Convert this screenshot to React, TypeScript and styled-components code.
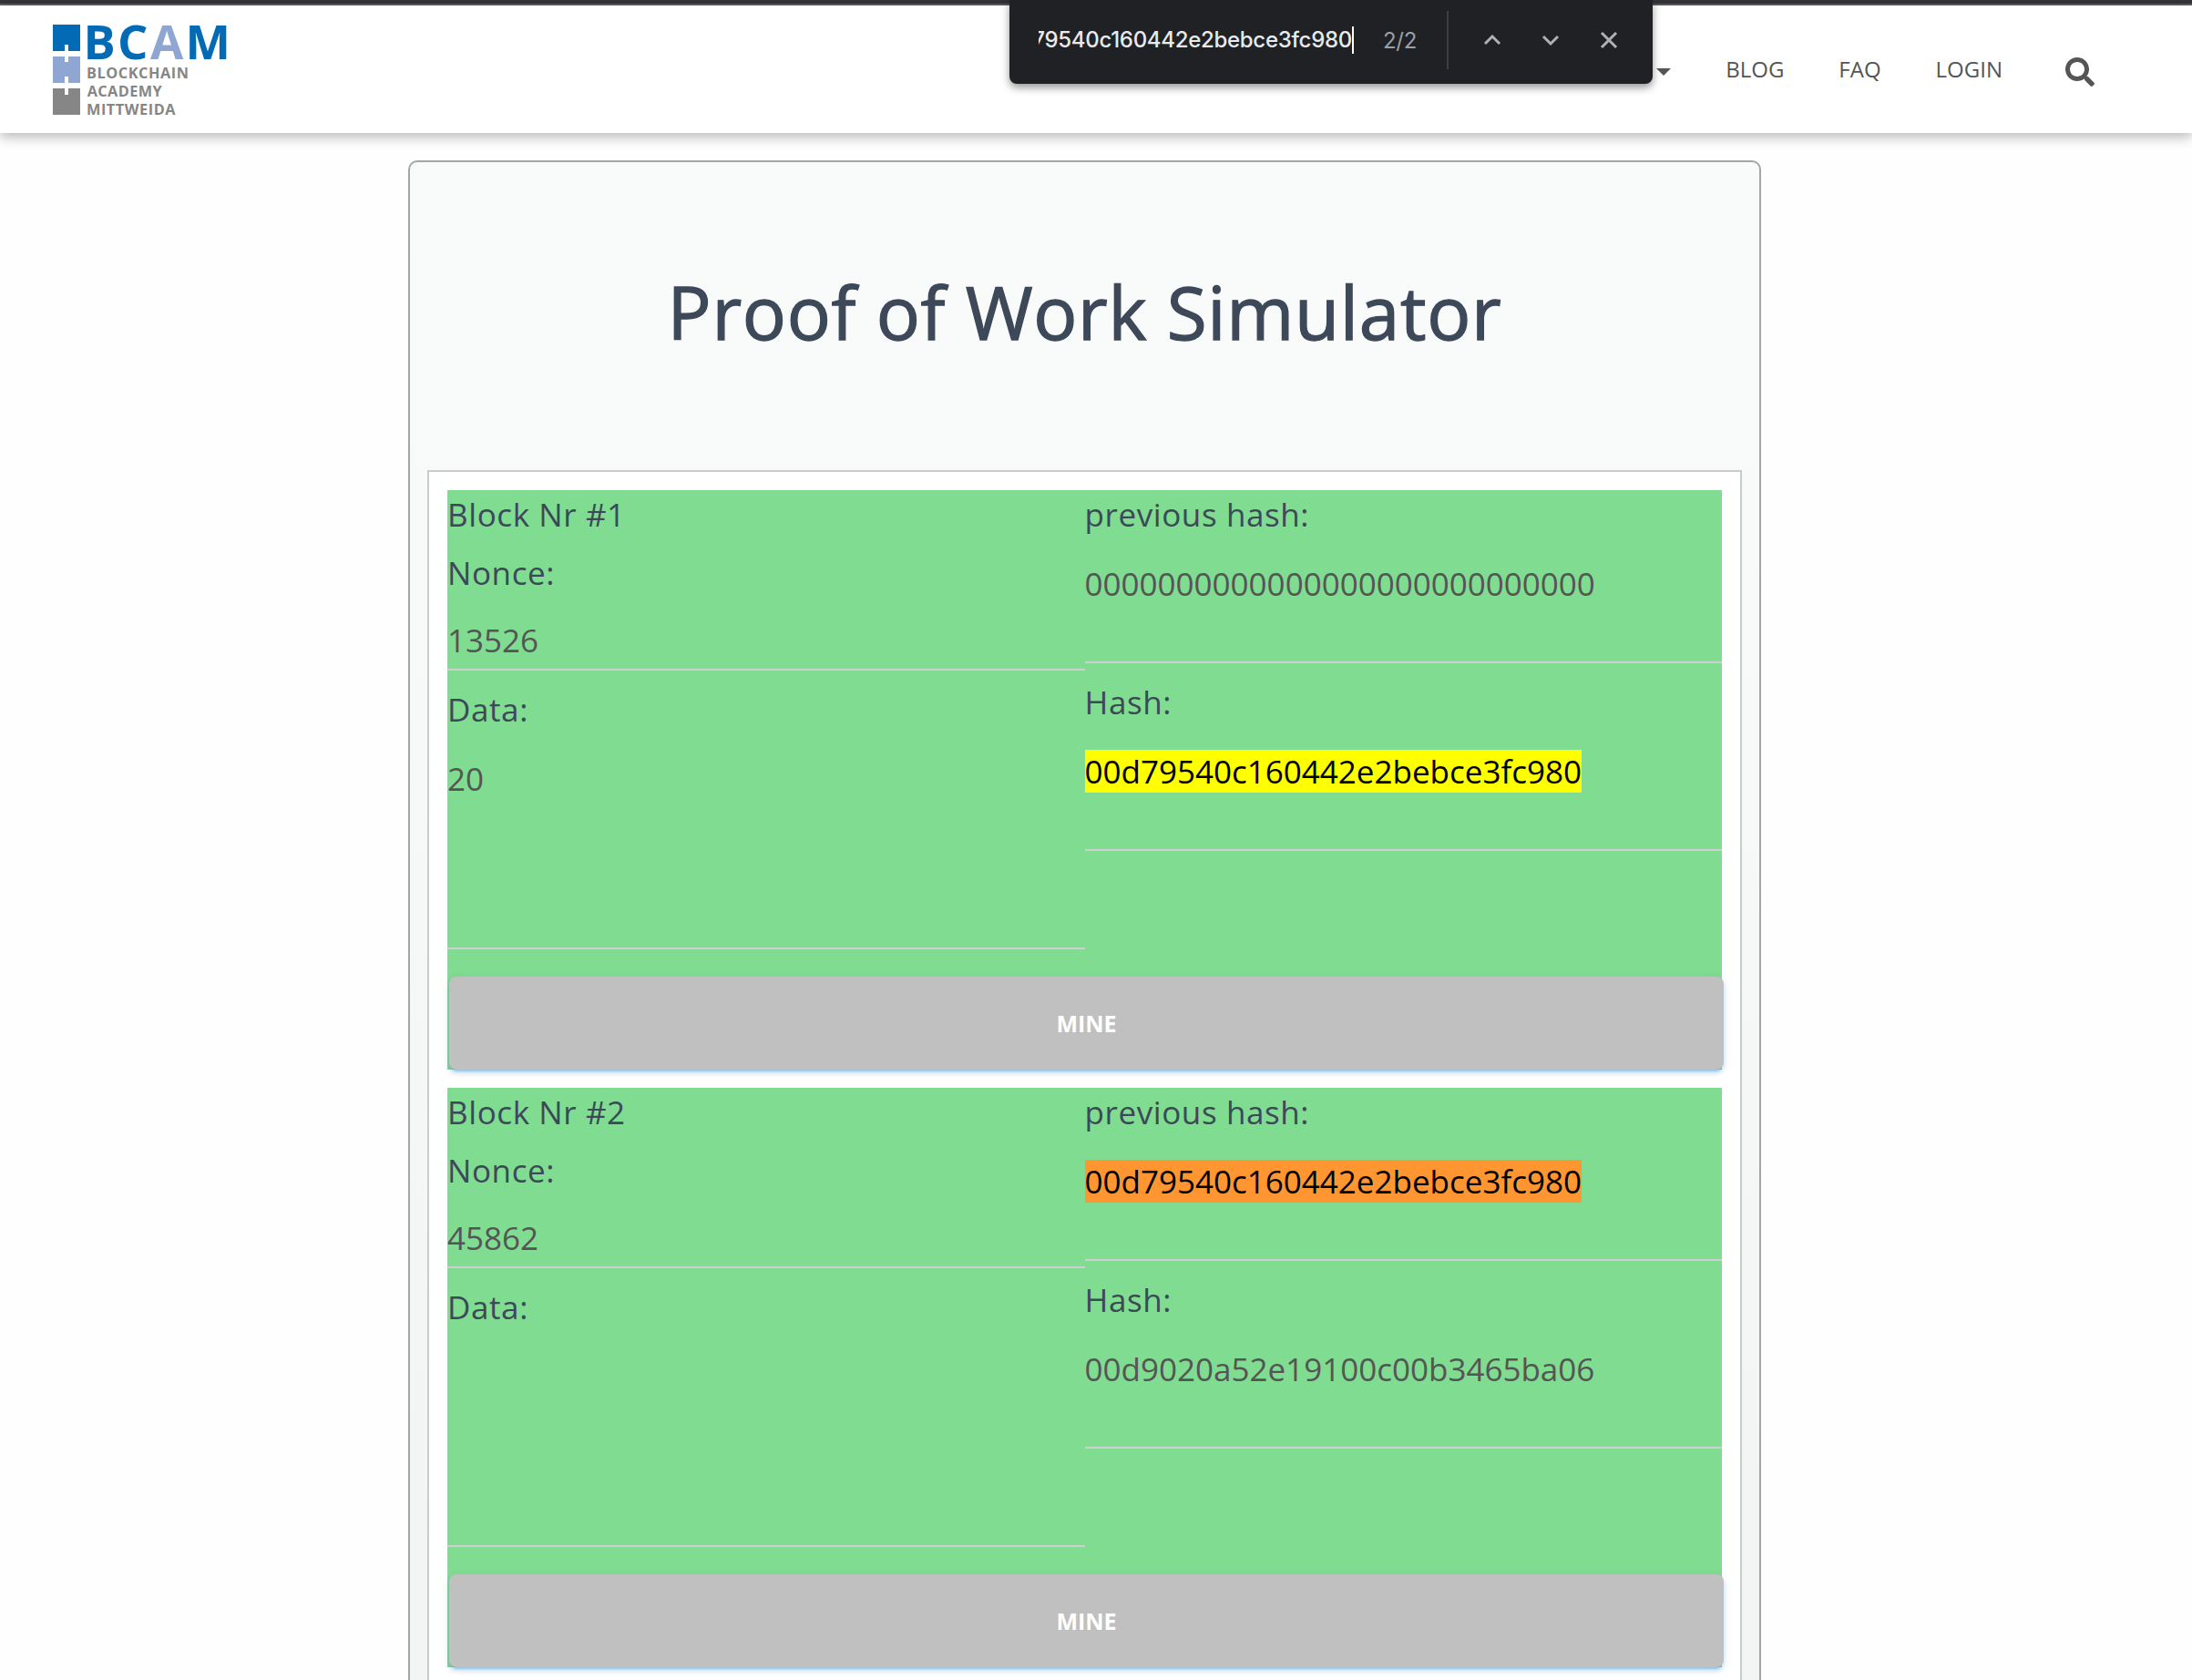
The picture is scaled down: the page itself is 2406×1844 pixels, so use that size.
import React from "react";
import styled, { createGlobalStyle } from "styled-components";
import { FaSearch } from "react-icons/fa";

const GlobalStyle = createGlobalStyle`
  *, *::before, *::after { box-sizing: border-box; }
  html, body { margin: 0; padding: 0; background: #fefefe; }
  body {
    height: 1844px;
    overflow: hidden;
    font-family: "Open Sans", "Noto Sans", sans-serif;
    color: #555;
  }
`;

const Page = styled.div`
  display: flex;
  flex-direction: column;
  width: 2406px;
  height: 1844px;
  overflow: hidden;
  position: relative;
`;

const BrowserEdge = styled.div`
  flex: none;
  height: 6px;
  background: #35363a;
  border-bottom: 2px solid #5f6064;
`;

const Header = styled.header`
  flex: none;
  display: flex;
  align-items: flex-start;
  justify-content: space-between;
  height: 140px;
  padding: 18px 107px 0 56px;
  background: #fff;
  box-shadow: 0 4px 12px rgba(0, 0, 0, 0.22), 0 2px 18px rgba(0, 0, 0, 0.1);
`;

const LogoMark = styled.svg`
  display: block;
  overflow: visible;
`;

const Nav = styled.nav`
  display: flex;
  align-items: center;
  height: 104px;
  font-size: 24px;
  line-height: 36px;
  color: #555;
`;

const Caret = styled.span`
  width: 0;
  height: 0;
  margin: 5px 60px 0 0;
  border: 8px solid transparent;
  border-top-color: #555;
  border-bottom: 0;
`;

const NavItem = styled.a<{ $gap: number }>`
  margin-right: ${(p) => p.$gap}px;
`;

const SearchIcon = styled(FaSearch)`
  width: 32px;
  height: 32px;
  margin-top: 6px;
  color: #555;
`;

const FindBar = styled.div`
  position: absolute;
  top: 0;
  left: 1108px;
  display: flex;
  align-items: center;
  width: 706px;
  height: 92px;
  padding: 0 32px 4px;
  background: #202124;
  border-radius: 0 0 8px 8px;
  box-shadow: 0 4px 10px rgba(0, 0, 0, 0.42);
  font-family: Inter, Roboto, sans-serif;
  font-size: 24px;
`;

const FindQuery = styled.div`
  display: flex;
  justify-content: flex-end;
  width: 346px;
  height: 30px;
  line-height: 30px;
  overflow: hidden;
  white-space: nowrap;
  font-weight: 500;
  letter-spacing: -0.3px;
  color: #e8eaed;
  border-right: 2px solid #fff;
`;

const FindCount = styled.div`
  width: 36px;
  margin-left: 32px;
  letter-spacing: -0.3px;
  color: #9aa0a6;
`;

const FindDivider = styled.div`
  width: 2px;
  height: 64px;
  margin: 0 36px 0 34px;
  background: #3c4043;
`;

const FindActions = styled.div`
  display: flex;
  gap: 40px;
`;

const FindIcon = styled.svg`
  display: block;
  width: 24px;
  height: 24px;
  fill: none;
  stroke: #afb1b4;
  stroke-width: 3;
`;

const Card = styled.main`
  flex: none;
  width: 1485px;
  height: 1900px;
  margin: 30px 0 0 448px;
  padding: 0 19px;
  background: linear-gradient(#f9fbfb 0, #f8faf9 420px, #f2f5f4 1500px);
  border: 2px solid #a3a6a5;
  border-radius: 10px;
`;

const Title = styled.h1`
  display: flex;
  align-items: center;
  justify-content: center;
  height: 338px;
  margin: 0;
  padding-bottom: 11px;
  font-size: 80px;
  font-weight: 400;
  letter-spacing: 0.72px;
  color: #3d4859;
  -webkit-text-stroke: 1.3px #3d4859;
`;

const Chain = styled.section`
  display: flex;
  flex-direction: column;
  gap: 20px;
  height: 1600px;
  padding: 20px;
  background: #fff;
  border: 2px solid #c9cccb;
`;

const Block = styled.article`
  display: grid;
  grid-template-columns: 1fr 1fr;
  grid-template-rows: 534px 102px;
  background: #80dc90;
`;

const Column = styled.div`
  display: flex;
  flex-direction: column;
`;

const Label = styled.label`
  height: 52px;
  margin-bottom: 12px;
  font-size: 35px;
  line-height: 54px;
  letter-spacing: 0.6px;
  color: #3d4859;
`;

const Field = styled.div<{ $height: number; $top: number }>`
  height: ${(p) => p.$height}px;
  margin-bottom: 16px;
  padding-top: ${(p) => p.$top}px;
  border-bottom: 2px solid #d0cfd0;
  font-size: 35px;
  line-height: 52px;
  color: #555;
`;

const Mark = styled.mark<{ $active?: boolean }>`
  color: #000;
  background: ${(p) => (p.$active ? "#ff9632" : "#ff0")};
`;

const MineButton = styled.button`
  grid-column: 1 / -1;
  margin: 0 -2px 0 2px;
  padding: 0;
  border: 0;
  border-radius: 8px;
  background: #c0c0c0;
  box-shadow:
    0 4px 4px rgba(0, 110, 190, 0.16),
    0 6px 2px -4px rgba(0, 110, 190, 0.22),
    0 2px 10px rgba(0, 110, 190, 0.14);
  font: 700 25px "Open Sans", "Noto Sans", sans-serif;
  color: #fff;
`;

function Logo() {
  return (
    <LogoMark width="200" height="104" viewBox="56 24 200 104" role="img" aria-label="BCAM">
      <path fill="#036ab5" d="M58 27h30v29H75v-7h-4v7H58z" />
      <path fill="#8fa5d2" d="M58 62h13v6h4v-6h13v29H75v-7h-4v7H58z" />
      <path fill="#868686" d="M58 97h13v7h4v-7h13v29H58z" />
      <g fontFamily="Open Sans" fontWeight="700">
        <text x="91.5" y="64.5" fontSize="52.5" fill="#036ab5" textLength="161.5">
          BC<tspan fill="#8fa5d2">A</tspan>M
        </text>
        <g fontSize="16.3" fill="#868686">
          <text x="95" y="86" textLength="112">BLOCKCHAIN</text>
          <text x="95.7" y="106" textLength="82">ACADEMY</text>
          <text x="95" y="126" textLength="97.5">MITTWEIDA</text>
        </g>
      </g>
    </LogoMark>
  );
}

type BlockData = { nr: number; nonce: string; data: string; prev: React.ReactNode; hash: React.ReactNode };

const blocks: BlockData[] = [
  {
    nr: 1,
    nonce: "13526",
    data: "20",
    prev: "0000000000000000000000000000",
    hash: <Mark>00d79540c160442e2bebce3fc980</Mark>,
  },
  {
    nr: 2,
    nonce: "45862",
    data: "",
    prev: <Mark $active>00d79540c160442e2bebce3fc980</Mark>,
    hash: "00d9020a52e19100c00b3465ba06",
  },
];

export default function App() {
  return (
    <Page>
      <GlobalStyle />
      <BrowserEdge />
      <Header>
        <Logo />
        <Nav>
          <Caret />
          <NavItem $gap={60}>BLOG</NavItem>
          <NavItem $gap={60}>FAQ</NavItem>
          <NavItem $gap={69}>LOGIN</NavItem>
          <SearchIcon />
        </Nav>
      </Header>
      <Card>
        <Title>Proof of Work Simulator</Title>
        <Chain>
          {blocks.map((b) => (
            <Block key={b.nr}>
              <Column>
                <Label>Block Nr #{b.nr}</Label>
                <Label>Nonce:</Label>
                <Field $height={70} $top={11}>{b.nonce}</Field>
                <Label>Data:</Label>
                <Field $height={226} $top={13}>{b.data}</Field>
              </Column>
              <Column>
                <Label>previous hash:</Label>
                <Field $height={126} $top={13}>{b.prev}</Field>
                <Label>Hash:</Label>
                <Field $height={126} $top={13}>{b.hash}</Field>
              </Column>
              <MineButton>MINE</MineButton>
            </Block>
          ))}
        </Chain>
      </Card>
      <FindBar>
        <FindQuery>79540c160442e2bebce3fc980</FindQuery>
        <FindCount>2/2</FindCount>
        <FindDivider />
        <FindActions>
          <FindIcon viewBox="0 0 24 24"><path d="M4 16 12 8l8 8" /></FindIcon>
          <FindIcon viewBox="0 0 24 24"><path d="M4 8l8 8 8-8" /></FindIcon>
          <FindIcon viewBox="0 0 24 24"><path d="M4 4l16 16M20 4 4 20" /></FindIcon>
        </FindActions>
      </FindBar>
    </Page>
  );
}
